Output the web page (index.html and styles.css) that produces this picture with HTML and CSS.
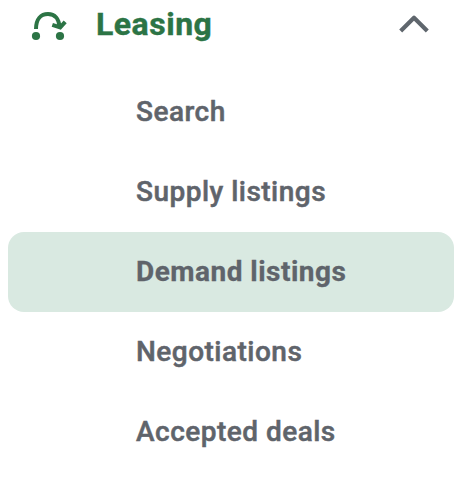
FILE: index.html
```
<!DOCTYPE html>
<html lang="en">
  <head>
    <meta charset="utf-8">
    <title>Leasing</title>
    <link rel="stylesheet" href="styles.css">
  </head>
  <body>
    <nav class="sidebar">
      <div class="group">
        <svg class="group-icon" width="40" height="34" viewBox="0 0 40 34">
          <circle cx="8" cy="29" r="4.1" fill="currentColor"/>
          <circle cx="32" cy="29" r="4.1" fill="currentColor"/>
          <path d="M8 22C8 12 13 7 20 7S31 12 31.5 20M24.3 17.8L32.2 20.4L37.2 14.8" fill="none" stroke="currentColor" stroke-width="4"/>
        </svg>
        <span class="group-title">Leasing</span>
        <svg class="chevron" width="32" height="20" viewBox="0 0 32 20">
          <path d="M2.7 17L16 3.8L29.3 17" fill="none" stroke="currentColor" stroke-width="4.2" stroke-linejoin="round"/>
        </svg>
      </div>
      <ul class="menu">
        <li><a>Search</a></li>
        <li><a>Supply listings</a></li>
        <li class="active"><a>Demand listings</a></li>
        <li><a>Negotiations</a></li>
        <li><a>Accepted deals</a></li>
      </ul>
    </nav>
  </body>
</html>
```
FILE: styles.css
```
body {
  margin: 0;
  background: #fff;
  font-family: Roboto, sans-serif;
  overflow: hidden;
}
.sidebar {
  padding: 0 14px 0 8px;
}
.group {
  display: flex;
  align-items: center;
  height: 48px;
  padding: 0 24px 0 20px;
  color: #2c7445;
}
.group-title {
  flex: 1;
  margin-left: 28px;
  font-size: 32px;
  font-weight: 700;
  letter-spacing: .5px;
  -webkit-text-stroke: .4px;
}
.chevron {
  color: #5f666d;
}
.menu {
  list-style: none;
  margin: 24px 0 0;
  padding: 0;
}
.menu li {
  height: 80px;
  padding-left: 128px;
  border-radius: 16px;
  line-height: 80px;
  font-size: 28px;
  font-weight: 500;
  letter-spacing: .48px;
  color: #5f646b;
  -webkit-text-stroke: .5px;
}
.menu li.active {
  background: #d9e9e1;
  font-weight: 700;
  -webkit-text-stroke: .3px;
}
```
